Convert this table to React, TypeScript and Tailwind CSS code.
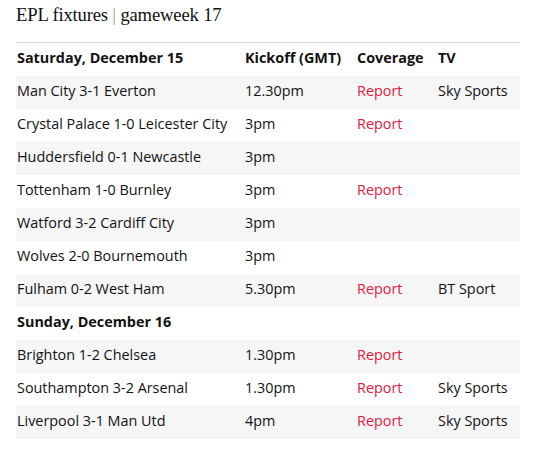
type Fixture = {
  match: string;
  kickoff: string;
  report: boolean;
  tv: string;
};

type Day = {
  label: string;
  fixtures: Fixture[];
};

const days: Day[] = [
  {
    label: 'Saturday, December 15',
    fixtures: [
      { match: 'Man City 3-1 Everton', kickoff: '12.30pm', report: true, tv: 'Sky Sports' },
      { match: 'Crystal Palace 1-0 Leicester City', kickoff: '3pm', report: true, tv: '' },
      { match: 'Huddersfield 0-1 Newcastle', kickoff: '3pm', report: false, tv: '' },
      { match: 'Tottenham 1-0 Burnley', kickoff: '3pm', report: true, tv: '' },
      { match: 'Watford 3-2 Cardiff City', kickoff: '3pm', report: false, tv: '' },
      { match: 'Wolves 2-0 Bournemouth', kickoff: '3pm', report: false, tv: '' },
      { match: 'Fulham 0-2 West Ham', kickoff: '5.30pm', report: true, tv: 'BT Sport' },
    ],
  },
  {
    label: 'Sunday, December 16',
    fixtures: [
      { match: 'Brighton 1-2 Chelsea', kickoff: '1.30pm', report: true, tv: '' },
      { match: 'Southampton 3-2 Arsenal', kickoff: '1.30pm', report: true, tv: 'Sky Sports' },
      { match: 'Liverpool 3-1 Man Utd', kickoff: '4pm', report: true, tv: 'Sky Sports' },
    ],
  },
];

const row = 'grid grid-cols-[228px_112px_81px_1fr] h-[33px] items-center pl-[1px] pb-[3px]';

export default function App() {
  return (
    <div className="bg-white w-[550px] h-[452px] px-4 pt-[3px] font-['Open_Sans',sans-serif] text-[14.4px] text-[#121212]">
      <h1 className="font-['Liberation_Serif',serif] text-[18.7px] leading-[24px] tracking-[-0.2px] text-[#121212] pb-[15px]">
        EPL fixtures <span className="text-[#999]">|</span> gameweek 17
      </h1>
      <div className="w-[504px] border-t border-[#d6d6d6]">
        {days.map((day, di) => (
          <div key={day.label}>
            <div className={row + ' font-bold'}>
              <div>{day.label}</div>
              {di === 0 && (
                <>
                  <div>Kickoff (GMT)</div>
                  <div>Coverage</div>
                  <div>TV</div>
                </>
              )}
            </div>
            {day.fixtures.map((f, i) => (
              <div key={f.match} className={row + (i % 2 === 0 ? ' bg-[#f6f6f6]' : '')}>
                <div>{f.match}</div>
                <div>{f.kickoff}</div>
                <div className="text-[#e5173f]">{f.report ? 'Report' : ''}</div>
                <div>{f.tv}</div>
              </div>
            ))}
          </div>
        ))}
      </div>
    </div>
  );
}
